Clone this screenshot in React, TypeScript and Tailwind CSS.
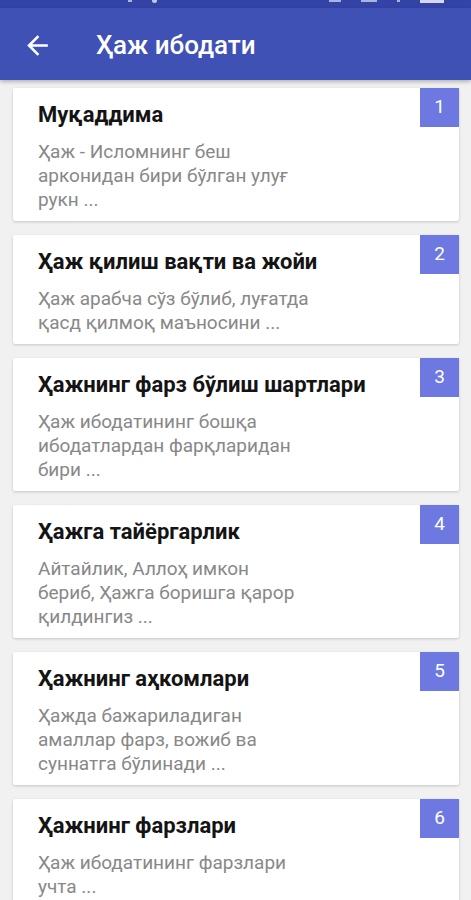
import React from 'react';

interface Item {
  title: string;
  lines: string[];
}

const items: Item[] = [
  { title: 'Муқаддима', lines: ['Ҳаж - Исломнинг беш', 'арконидан бири бўлган улуғ', 'рукн ...'] },
  { title: 'Ҳаж қилиш вақти ва жойи', lines: ['Ҳаж арабча сўз бўлиб, луғатда', 'қасд қилмоқ маъносини ...'] },
  { title: 'Ҳажнинг фарз бўлиш шартлари', lines: ['Ҳаж ибодатининг бошқа', 'ибодатлардан фарқларидан', 'бири ...'] },
  { title: 'Ҳажга тайёргарлик', lines: ['Айтайлик, Аллоҳ имкон', 'бериб, Ҳажга боришга қарор', 'қилдингиз ...'] },
  { title: 'Ҳажнинг аҳкомлари', lines: ['Ҳажда бажариладиган', 'амаллар фарз, вожиб ва', 'суннатга бўлинади ...'] },
  { title: 'Ҳажнинг фарзлари', lines: ['Ҳаж ибодатининг фарзлари', 'учта ...'] },
];

const Card: React.FC<{ item: Item; index: number }> = ({ item, index }) => (
  <div className="relative bg-white rounded-[2px] shadow-[0_1px_3px_rgba(0,0,0,0.18)] pl-[25px] pr-14 pt-[13px] pb-[9px]">
    <div className="absolute top-0 right-0 w-[39px] h-[39px] bg-[#6d78e0] flex items-center justify-center text-white text-[19px]">
      {index}
    </div>
    <div className="text-[22px] leading-7 font-bold text-[#141414]">{item.title}</div>
    <div className="mt-[11px] text-[19px] leading-6 text-[#888888]">
      {item.lines.map((line, i) => (
        <div key={i}>{line}</div>
      ))}
    </div>
  </div>
);

export default function App() {
  return (
    <div className="w-[471px] h-[900px] overflow-hidden bg-[#f1f1f1]" style={{ fontFamily: 'Roboto, "Noto Sans", sans-serif' }}>
      <div className="h-2 bg-[#3443a6] flex items-start pl-[128px] pr-[27px] gap-5">
        <div className="w-1 h-[2px] bg-white/60" />
        <div className="w-[5px] h-[3px] rounded-b-full bg-white/70" />
        <div className="flex-1" />
        <div className="w-3 h-[2px] bg-white/60" />
        <div className="w-4 h-[2px] bg-white/60" />
        <div className="w-[3px] h-[2px] bg-white/60" />
        <div className="w-6 h-[3px] bg-white/80" />
      </div>
      <div className="h-[72px] bg-[#3f51b5] flex items-center shadow-[0_2px_4px_rgba(0,0,0,0.25)] relative z-10">
        <svg className="ml-[22px] mt-[2px]" width="31" height="31" viewBox="0 0 24 24" fill="white">
          <path d="M20 11H7.83l5.59-5.59L12 4l-8 8 8 8 1.41-1.41L7.83 13H20v-2z" />
        </svg>
        <div className="ml-[43px] mt-[2px] text-white text-[26px] font-medium">Ҳаж ибодати</div>
      </div>
      <div className="px-[13px] pt-2 flex flex-col gap-[14px] w-[472px]">
        {items.map((item, i) => (
          <Card key={i} item={item} index={i + 1} />
        ))}
      </div>
    </div>
  );
}
